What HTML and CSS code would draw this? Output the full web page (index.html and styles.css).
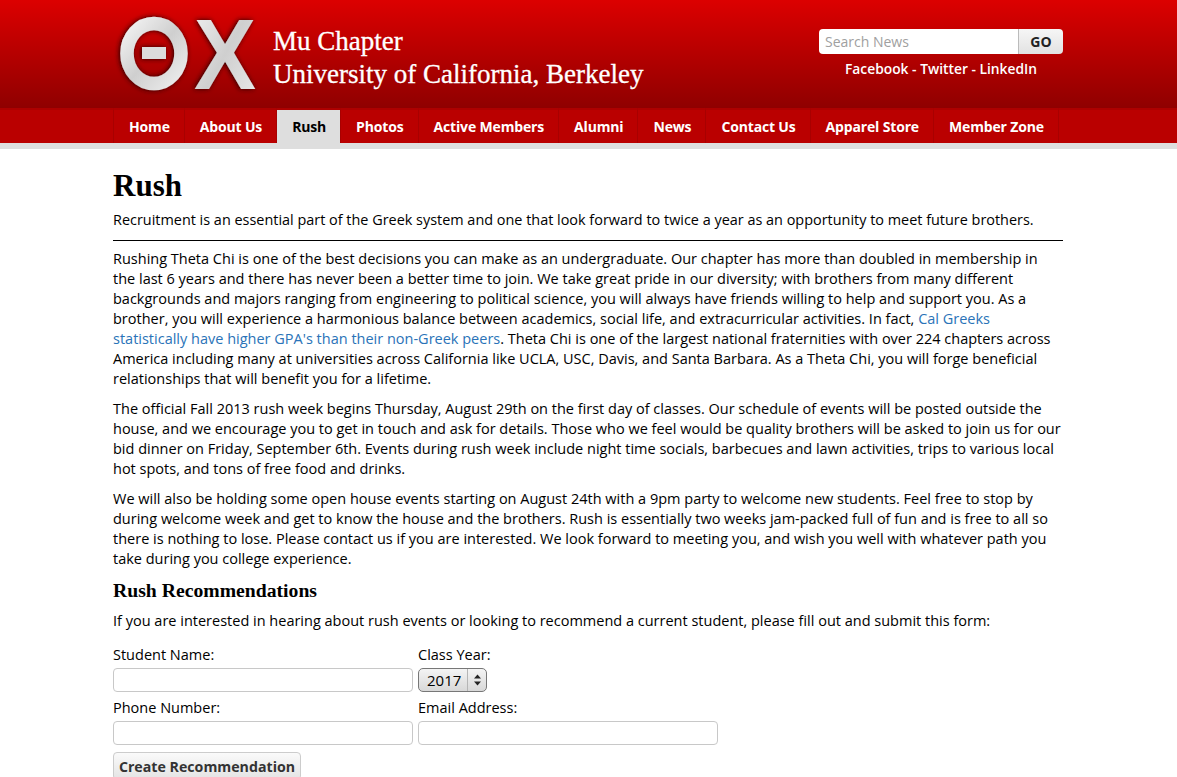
FILE: index.html
```html
<!DOCTYPE html>
<html lang="en">
<head>
    <meta charset="UTF-8">
    <meta name="viewport" content="width=device-width, initial-scale=1.0">
    <title>Rush</title>
    <link rel="stylesheet" href="styles.css">
</head>
<body>
    <header class="masthead">
        <div class="container masthead-inner">
            <svg class="logo" width="146" height="84" viewBox="0 0 146 84" role="img" aria-label="Theta Chi">
                <defs>
                    <linearGradient id="silver" x1="0" y1="0" x2="1" y2="1">
                        <stop offset="0" stop-color="#f2f2f2"/>
                        <stop offset="0.5" stop-color="#cfcfcf"/>
                        <stop offset="1" stop-color="#ececec"/>
                    </linearGradient>
                    <filter id="dark" x="-15%" y="-15%" width="130%" height="130%">
                        <feDropShadow dx="-1" dy="0" stdDeviation="2.5" flood-color="#200000" flood-opacity="1"/>
                    </filter>
                </defs>
                <g filter="url(#dark)">
                    <ellipse cx="41" cy="41.5" rx="27" ry="30" fill="none" stroke="url(#silver)" stroke-width="13.5"/>
                    <rect x="29" y="35" width="24" height="12" fill="#dcdcdc"/>
                    <text class="logo-chi" transform="translate(81 77) scale(0.93 1)" fill="url(#silver)">Χ</text>
                </g>
            </svg>
            <div class="chapter">Mu Chapter<br>University of California, Berkeley</div>
            <div class="masthead-right">
                <form class="search">
                    <input class="search-input" type="text" placeholder="Search News">
                    <button class="search-btn" type="button">GO</button>
                </form>
                <div class="social"><a href="#">Facebook</a> - <a href="#">Twitter</a> - <a href="#">LinkedIn</a></div>
            </div>
        </div>
    </header>
    <nav class="mainnav">
        <ul class="container navlist">
            <li><a href="#">Home</a></li>
            <li><a href="#">About Us</a></li>
            <li class="active"><a href="#">Rush</a></li>
            <li><a href="#">Photos</a></li>
            <li><a href="#">Active Members</a></li>
            <li><a href="#">Alumni</a></li>
            <li><a href="#">News</a></li>
            <li><a href="#">Contact Us</a></li>
            <li><a href="#">Apparel Store</a></li>
            <li><a href="#">Member Zone</a></li>
        </ul>
    </nav>
    <main class="container content">
        <h1>Rush</h1>
        <p class="lead">Recruitment is an essential part of the Greek system and one that look forward to twice a year as an opportunity to meet future brothers.</p>
        <hr>
        <p>Rushing Theta Chi is one of the best decisions you can make as an undergraduate. Our chapter has more than doubled in membership in<br>the last 6 years and there has never been a better time to join. We take great pride in our diversity; with brothers from many different<br>backgrounds and majors ranging from engineering to political science, you will always have friends willing to help and support you. As a<br>brother, you will experience a harmonious balance between academics, social life, and extracurricular activities. In fact, <a href="#">Cal Greeks<br>statistically have higher GPA's than their non-Greek peers</a>. Theta Chi is one of the largest national fraternities with over 224 chapters across<br>America including many at universities across California like UCLA, USC, Davis, and Santa Barbara. As a Theta Chi, you will forge beneficial<br>relationships that will benefit you for a lifetime.</p>
        <p>The official Fall 2013 rush week begins Thursday, August 29th on the first day of classes. Our schedule of events will be posted outside the<br>house, and we encourage you to get in touch and ask for details. Those who we feel would be quality brothers will be asked to join us for our<br>bid dinner on Friday, September 6th. Events during rush week include night time socials, barbecues and lawn activities, trips to various local<br>hot spots, and tons of free food and drinks.</p>
        <p>We will also be holding some open house events starting on August 24th with a 9pm party to welcome new students. Feel free to stop by<br>during welcome week and get to know the house and the brothers. Rush is essentially two weeks jam-packed full of fun and is free to all so<br>there is nothing to lose. Please contact us if you are interested. We look forward to meeting you, and wish you well with whatever path you<br>take during you college experience.</p>
        <h2>Rush Recommendations</h2>
        <p>If you are interested in hearing about rush events or looking to recommend a current student, please fill out and submit this form:</p>
        <form class="rec-form">
            <div class="field">
                <label for="studentName">Student Name:</label>
                <input type="text" id="studentName">
            </div>
            <div class="field">
                <label for="classYear">Class Year:</label>
                <div class="select-box" id="classYear">
                    <span class="select-value">2017</span>
                    <span class="select-arrows">
                        <svg width="7" height="12" viewBox="0 0 7 12"><polygon points="3.5,0.5 7,4.5 0,4.5" fill="#222"/><polygon points="0,7.5 7,7.5 3.5,11.5" fill="#222"/></svg>
                    </span>
                </div>
            </div>
            <div class="field">
                <label for="phone">Phone Number:</label>
                <input type="text" id="phone">
            </div>
            <div class="field">
                <label for="email">Email Address:</label>
                <input type="text" id="email">
            </div>
            <button class="submit-btn" type="button">Create Recommendation</button>
        </form>
    </main>
</body>
</html>
```

FILE: styles.css
```css
html, body {
    height: 777px;
    overflow: hidden;
}
body {
    font-family: "Open Sans", sans-serif;
    font-size: 14.5px;
    line-height: 20px;
    color: #000;
    background: #fff;
    margin: 0;
}
a {
    text-decoration: none;
}
.container {
    width: 950px;
    margin: 0 0 0 113px;
}
.masthead {
    height: 108px;
    background: linear-gradient(to bottom, #dc0000, #8f0000);
}
.masthead-inner {
    display: flex;
    height: 108px;
}
.logo {
    flex: none;
    margin-top: 12px;
    overflow: visible;
}
.chapter {
    font-family: "Liberation Serif", serif;
    font-size: 27px;
    line-height: 33px;
    color: #fff;
    -webkit-text-stroke: 0.3px #fff;
    margin: 25px 0 0 14px;
    white-space: nowrap;
}
.logo-chi {
    font-family: "Liberation Sans", sans-serif;
    font-weight: bold;
    font-size: 100px;
}
.masthead-right {
    margin: 29px 0 0 auto;
    width: 244px;
}
.search {
    display: flex;
    height: 25px;
}
.search-input {
    flex: 1;
    min-width: 0;
    border: 0;
    border-radius: 4px 0 0 4px;
    padding: 0 6px;
    font-family: inherit;
    font-size: 14px;
    background: #fff;
}
.search-input::placeholder {
    color: #a0a0a0;
}
.search-btn {
    width: 45px;
    padding: 0;
    border: 0;
    border-left: 1px solid #bbb;
    border-radius: 0 4px 4px 0;
    background: linear-gradient(to bottom, #f6f6f6, #e2e2e2);
    font-family: inherit;
    font-size: 14px;
    font-weight: 700;
    color: #222;
}
.social {
    text-align: center;
    color: #fff;
    margin-top: 5px;
    font-size: 13.8px;
    font-weight: 600;
}
.social a {
    color: #fff;
}
.mainnav {
    height: 35px;
    background: #ba0000;
    border-bottom: 6px solid #dedede;
    box-shadow: inset 0 2px 0 #ad0000;
}
.navlist {
    display: flex;
    list-style: none;
    padding: 0;
    height: 35px;
}
.navlist li {
    border-right: 1px solid #a80000;
}
.navlist li:first-child {
    border-left: 1px solid #a80000;
}
.navlist a {
    display: block;
    padding: 7px 14px 0 15px;
    height: 33px;
    box-sizing: border-box;
    margin-top: 2px;
    color: #fff;
    font-size: 14px;
    font-weight: 700;
    letter-spacing: -0.16px;
    white-space: nowrap;
}
.navlist .active a {
    background: #dedede;
    color: #000;
}
.content {
    padding-top: 19px;
}
h1 {
    font-family: "Liberation Serif", serif;
    font-size: 31px;
    line-height: 36px;
    font-weight: bold;
    margin: 0 0 6px;
}
h2 {
    font-family: "Liberation Serif", serif;
    font-size: 19.7px;
    line-height: 22px;
    font-weight: bold;
    margin: 0 0 10px;
}
p {
    margin: 0 0 10px;
    white-space: nowrap;
}
p a {
    color: #2a73b8;
}
.lead {
    font-size: 14.43px;
}
hr {
    border: 0;
    border-top: 1px solid #000;
    margin: 0 0 8px;
}
.rec-form {
    display: grid;
    grid-template-columns: 300px 300px;
    column-gap: 5px;
    width: 605px;
    margin-top: 14px;
}
.field {
    height: 53px;
}
.field label {
    display: block;
    height: 23px;
    line-height: 20px;
}
.field input {
    display: block;
    width: 300px;
    height: 24px;
    box-sizing: border-box;
    border: 1px solid #c8c8c8;
    border-radius: 4px;
    background: #fff;
}
.select-box {
    display: flex;
    align-items: center;
    width: 69px;
    height: 24px;
    box-sizing: border-box;
    border: 1px solid #777;
    border-radius: 5px;
    background: linear-gradient(to bottom, #f4f4f4, #d8d8d8);
}
.select-value {
    flex: 1;
    padding-left: 8px;
    font-size: 15px;
}
.select-arrows {
    display: flex;
    align-items: center;
    justify-content: center;
    width: 18px;
    height: 100%;
    border-left: 1px solid #b5b5b5;
}
.submit-btn {
    grid-column: 1 / 3;
    justify-self: start;
    margin-top: 1px;
    width: 188px;
    height: 28px;
    padding: 0;
    border: 1px solid #ccc;
    border-radius: 4px;
    background: linear-gradient(to bottom, #fafafa, #e4e4e4);
    font-family: inherit;
    font-size: 14.2px;
    font-weight: 700;
    color: #333;
}
```
